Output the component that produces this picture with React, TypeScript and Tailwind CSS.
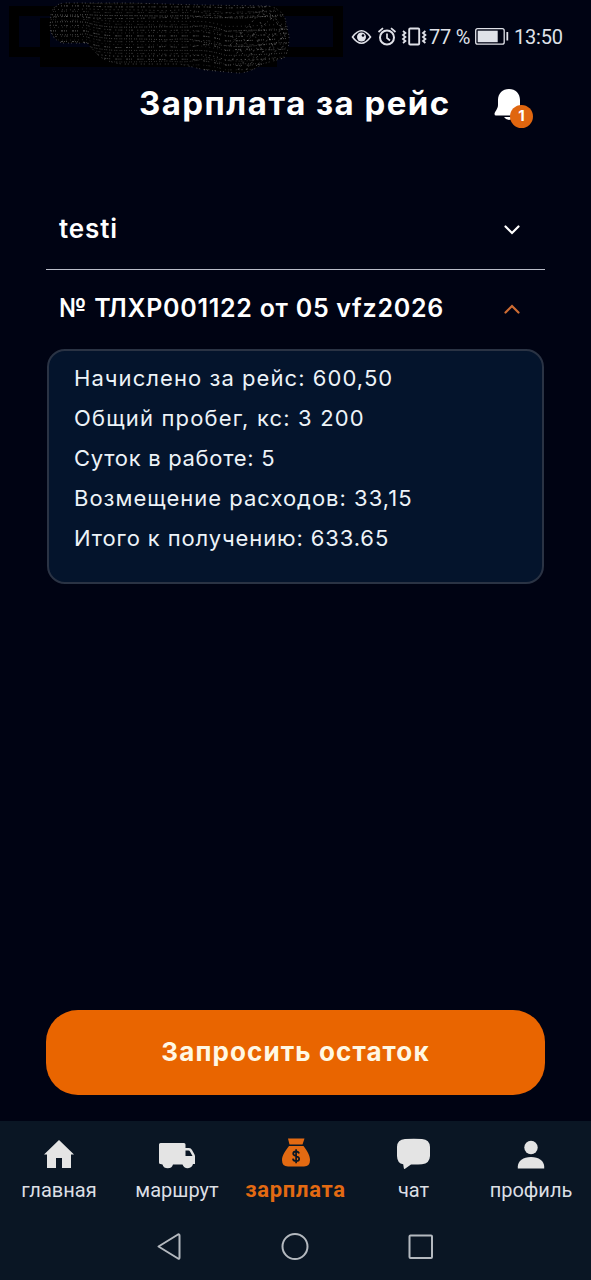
/**
 * Salary screen - trip payout details for a driver
 *
 * Sections:
 * - Status bar
 * - Header with notification bell
 * - Accordion with trip payouts
 * - Request button and bottom navigation
 */

import React, { useState } from 'react';

interface Trip {
  title: string;
  titleClass: string;
  rows: { text: string; className: string }[];
}

interface NavItem {
  label: string;
  className: string;
  icon: React.ReactNode;
}

const trips: Trip[] = [
  { title: 'testi', titleClass: 'text-[26px] tracking-[0.9px]', rows: [] },
  {
    title: '№ ТЛХР001122 от 05 vfz2026',
    titleClass: 'text-[25px] tracking-[0.72px] -mt-[2px]',
    rows: [
      { text: 'Начислено за рейс: 600,50', className: 'tracking-[1.06px]' },
      { text: 'Общий пробег, кс: 3 200', className: 'tracking-[1.16px]' },
      { text: 'Суток в работе: 5', className: 'tracking-[0.7px]' },
      { text: 'Возмещение расходов: 33,15', className: 'tracking-[1px]' },
      { text: 'Итого к получению: 633.65', className: 'tracking-[0.88px]' },
    ],
  },
];

// Outline of the painted-over carrier name
const SCRIBBLE =
  'M51 15 Q53 4 64 3 H130 L200 5 L268 6 Q280 8 285 18 L289 36 Q289 52 284 58 L262 64 Q250 73 238 73 L205 70 L180 64 H122 Q106 62 98 55 L87 43 H62 Q50 38 50 26 Z';

// Pen strokes: flat on the left, sagging towards the right
const strokes = Array.from({ length: 24 }, (_, i) => {
  const y = 4 + i * 2.9;
  const w = ((i * 7) % 5) - 2;
  const sag = i > 5 ? 5 : 1;
  return {
    d: `M50 ${y - sag} q18 ${w} 36 0 q14 ${sag} 34 ${sag} t48 ${w * 0.5} q18 ${-w} 30 ${w * 0.5} t28 ${sag} q16 ${w} 36 -1 t30 -2`,
    dash: ['1 1 1 2', '1 2 1 1 2 4', '1 3', '2 1 1 1 1 5'][i % 4],
    opacity: 0.2 + ((i * 5) % 7) * 0.05,
  };
});

const Scribble: React.FC = () => (
  <svg width="345" height="76" viewBox="0 0 345 76" fill="none">
    <rect x="14" y="11" width="324" height="41" stroke="#000" strokeWidth="10" />
    <rect x="45" y="23" width="227" height="39" stroke="#000" strokeWidth="10" />
    <path d={SCRIBBLE} fill="#000" />
    <clipPath id="scribble">
      <path d={SCRIBBLE} />
    </clipPath>
    <g clipPath="url(#scribble)" stroke="#c8c8c8" strokeWidth="0.9">
      {strokes.map((s, i) => (
        <path key={i} d={s.d} strokeDasharray={s.dash} opacity={s.opacity} />
      ))}
      <path
        d="M232 60 q8 -12 18 -22 t22 -20 M238 70 q10 -16 24 -26 t24 -18 M246 70 q10 -14 20 -20 t20 -16 M256 66 q10 -10 28 -20 M230 45 q14 -14 30 -32 M255 12 q16 2 28 18 M262 10 q18 6 24 30 M232 36 l12 20 M240 32 l14 26 M250 26 l14 28 M260 22 l14 26"
        strokeDasharray="2 2 1 3"
        opacity="0.4"
      />
    </g>
    <path d={SCRIBBLE} stroke="#aaa" strokeWidth="0.9" strokeDasharray="1 4 1 2" opacity="0.45" />
  </svg>
);

const StatusBar: React.FC = () => (
  <div className="flex h-[76px] justify-between">
    <Scribble />
    <div className="flex h-[74px] w-[240px] items-center font-['Roboto',sans-serif] text-[20px] text-[#dfe1e8]">
      <svg width="78" height="24" viewBox="351 25 78 24" fill="none" stroke="currentColor" className="shrink-0">
        <path d="M352.500 37 Q361.500 24.500 370.500 37 Q361.500 49.500 352.500 37 Z" strokeWidth="1.600" />
        <circle cx="361.500" cy="37" r="4.500" fill="currentColor" stroke="none" />
        <circle cx="363" cy="35.500" r="1.300" fill="#000313" stroke="none" />
        <circle cx="387" cy="37.500" r="7" strokeWidth="2" />
        <path d="M387 33.500 v4.500 l3 2.500 M378.500 32 l4.500 -3.800 M395.500 32 l-4.500 -3.800" strokeWidth="1.700" />
        <rect x="409.200" y="28.500" width="10" height="16" rx="1" strokeWidth="1.900" />
        <path d="M403 31 l2.400 2 l-2.400 2 l2.400 2 l-2.400 2 l2.400 2 l-2.400 2 M425.400 31 l-2.400 2 l2.400 2 l-2.400 2 l2.400 2 l-2.400 2 l2.400 2" strokeWidth="1.800" />
      </svg>
      <span className="w-[46px] whitespace-nowrap tracking-[-0.2px]">77 %</span>
      <svg width="34" height="18" viewBox="475 28 34 18" fill="none" stroke="currentColor" className="shrink-0">
        <rect x="475.700" y="28.700" width="28.500" height="15.500" rx="2" strokeWidth="1.300" />
        <rect x="477.700" y="30.700" width="20" height="11.500" fill="currentColor" stroke="none" />
        <path d="M507.300 32 v8.500" strokeWidth="1.800" />
      </svg>
      <span className="ml-[5px] tracking-[-0.2px]">13:50</span>
    </div>
  </div>
);

const Header: React.FC = () => (
  <header className="flex h-[56px] items-center pl-[139px]">
    <h1 className="w-[354px] whitespace-nowrap text-[33px] font-bold tracking-[1.45px] text-white">Зарплата за рейс</h1>
    <div className="relative h-10 w-[42px]">
      <svg width="42" height="40" viewBox="0 0 42 40" fill="#fff">
        <path d="M16 5 C9.500 5 5 9.500 5 16 V21 C5 25 1.500 28 1.500 30 Q1.500 31.500 3 31.500 H29 Q30.500 31.500 30.500 30 C30.500 28 27 25 27 21 V16 C27 9.500 22.500 5 16 5 Z" />
        <path d="M11 33 H21 Q19 36 16 36 T11 33 Z" />
      </svg>
      <span className="absolute left-[17px] top-[21px] flex h-[23px] w-[23px] items-center justify-center rounded-full bg-[#e0660f] text-[15px] font-bold text-white">
        1
      </span>
    </div>
  </header>
);

const Chevron: React.FC<{ open: boolean }> = ({ open }) => (
  <svg width="18" height="12" viewBox="0 0 18 12" fill="none" strokeWidth="2.200" strokeLinecap="round">
    <path d={open ? 'M2.500 8.500 L9 2 L15.500 8.500' : 'M2.500 3.500 L9 10 L15.500 3.500'} stroke={open ? '#cd6c33' : '#fff'} />
  </svg>
);

const navItems: NavItem[] = [
  {
    label: 'главная',
    className: 'w-[118px] text-[20px] text-[#dcdfe4]',
    icon: (
      <path d="M20 4 L35 18.500 H32 V32 H23 V22 H17 V32 H8 V18.500 H5 Z" />
    ),
  },
  {
    label: 'маршрут',
    className: 'w-[118px] text-[20px] text-[#dcdfe4]',
    icon: (
      <path
        fillRule="evenodd"
        d="M3.500 7 H27 Q28.500 7 28.500 8.500 V12 H32 Q34 12 35 14 L37.500 18.500 Q38 19.500 38 20.500 V28 H36 A5.500 5.500 0 0 1 25.500 28.500 H16 A5.500 5.500 0 0 1 5.500 28.500 L3.500 28 Q2 28 2 26.500 V8.500 Q2 7 3.500 7 Z M28.500 14.500 V20 H35.500 L33 15.500 Q32.500 14.500 31.500 14.500 Z"
      />
    ),
  },
  {
    label: 'зарплата',
    className: 'w-[119px] text-[22px] font-bold tracking-[0.7px] text-[#e36a12]',
    icon: (
      <>
        <path d="M12 2.500 H28.500 L26.500 8.500 H13.500 Z M13 10 H27.500 C31 15 34 19 34 24 Q34 30.500 28 30.500 H12 Q6 30.500 6 24 C6 19 9.500 15 13 10 Z" />
        <path
          d="M23 17.500 Q22.500 15.300 20 15.300 Q17.200 15.300 17.200 17.700 C17.200 20.500 23.200 19.500 23.200 22.800 Q23.200 25.200 20.200 25.200 Q17.200 25.200 16.900 22.700 M20.100 13.200 V27.300"
          fill="none"
          stroke="#0a1624"
          strokeWidth="1.700"
        />
      </>
    ),
  },
  {
    label: 'чат',
    className: 'w-[117px] text-[20px] text-[#dcdfe4]',
    icon: (
      <path d="M11 3 Q20 2.300 28 3 Q35.700 3.500 36 11 V20 Q35.700 27.500 28 28.200 Q22 28.800 17 28.500 L11 32.700 Q10 33.300 9.800 32 L9.200 28.200 Q3.200 27.500 3 20 V11 Q3.200 3.500 11 3 Z" />
    ),
  },
  {
    label: 'профиль',
    className: 'w-[118px] text-[20px] text-[#dcdfe4]',
    icon: (
      <>
        <circle cx="20" cy="11.500" r="6.700" />
        <path d="M6.800 32.500 V30.500 C7 25 12 21 20 21 C28 21 33 25 33.200 30.500 V32.500 Z" />
      </>
    ),
  },
];

const BottomNav: React.FC = () => (
  <nav className="h-[159px] bg-[#0a1624] font-['Roboto',sans-serif]">
    <div className="flex pt-[15px]">
      {navItems.map((item) => (
        <div key={item.label} className={`flex flex-col items-center ${item.className}`}>
          <svg width="40" height="36" viewBox="0 0 40 36" fill={item.label === 'зарплата' ? '#e36a12' : '#e4e4e4'}>
            {item.icon}
          </svg>
          <span className="mt-[5px] leading-[26px]">{item.label}</span>
        </div>
      ))}
    </div>

    {/* System buttons */}
    <svg className="mt-[27px] ml-[150px]" width="290" height="34" viewBox="150 1230 290 34" fill="none" stroke="#b4b9bf" strokeWidth="2" strokeLinejoin="round">
      <path d="M158.500 1246.500 L178 1234.500 Q179.500 1234 179.500 1235.500 V1257.500 Q179.500 1259.500 178 1258.500 Z" />
      <circle cx="295" cy="1246.500" r="12.500" />
      <rect x="409.500" y="1235.500" width="22.500" height="22.500" rx="1" />
    </svg>
  </nav>
);

const App: React.FC = () => {
  const [openIndex, setOpenIndex] = useState(1);

  return (
    <div className="flex h-[1280px] w-[591px] flex-col overflow-hidden bg-[#000313] font-['Inter',sans-serif]">
      <StatusBar />
      <Header />

      <main className="flex flex-1 flex-col px-[46px] pt-[56px]">
        {trips.map((trip, index) => (
          <section key={trip.title} className={index > 0 ? 'border-t border-[#b9bcc8]' : ''}>
            <button
              className={`flex w-full items-center justify-between pr-[24px] pl-[13px] text-left ${index > 0 ? 'h-[79px]' : 'h-[81px]'}`}
              onClick={() => setOpenIndex(index)}
            >
              <span className={`whitespace-nowrap font-semibold text-white ${trip.titleClass}`}>{trip.title}</span>
              <Chevron open={openIndex === index} />
            </button>
            {openIndex === index && (
              <div className="mx-px h-[235px] rounded-[18px] border-2 border-[#2a3344] bg-[#04142c] pt-[7px] pl-[25px]">
                {trip.rows.map((row) => (
                  <p key={row.text} className={`whitespace-nowrap text-[22px] leading-[40px] text-[#edf3f8] ${row.className}`}>
                    {row.text}
                  </p>
                ))}
              </div>
            )}
          </section>
        ))}

        <button className="mt-auto mb-[26px] h-[85px] rounded-[32px] bg-[#e96500] pb-[2px] text-[26px] font-bold tracking-[1.1px] text-[#fff8e4]">
          Запросить остаток
        </button>
      </main>

      <BottomNav />
    </div>
  );
};

export default App;
